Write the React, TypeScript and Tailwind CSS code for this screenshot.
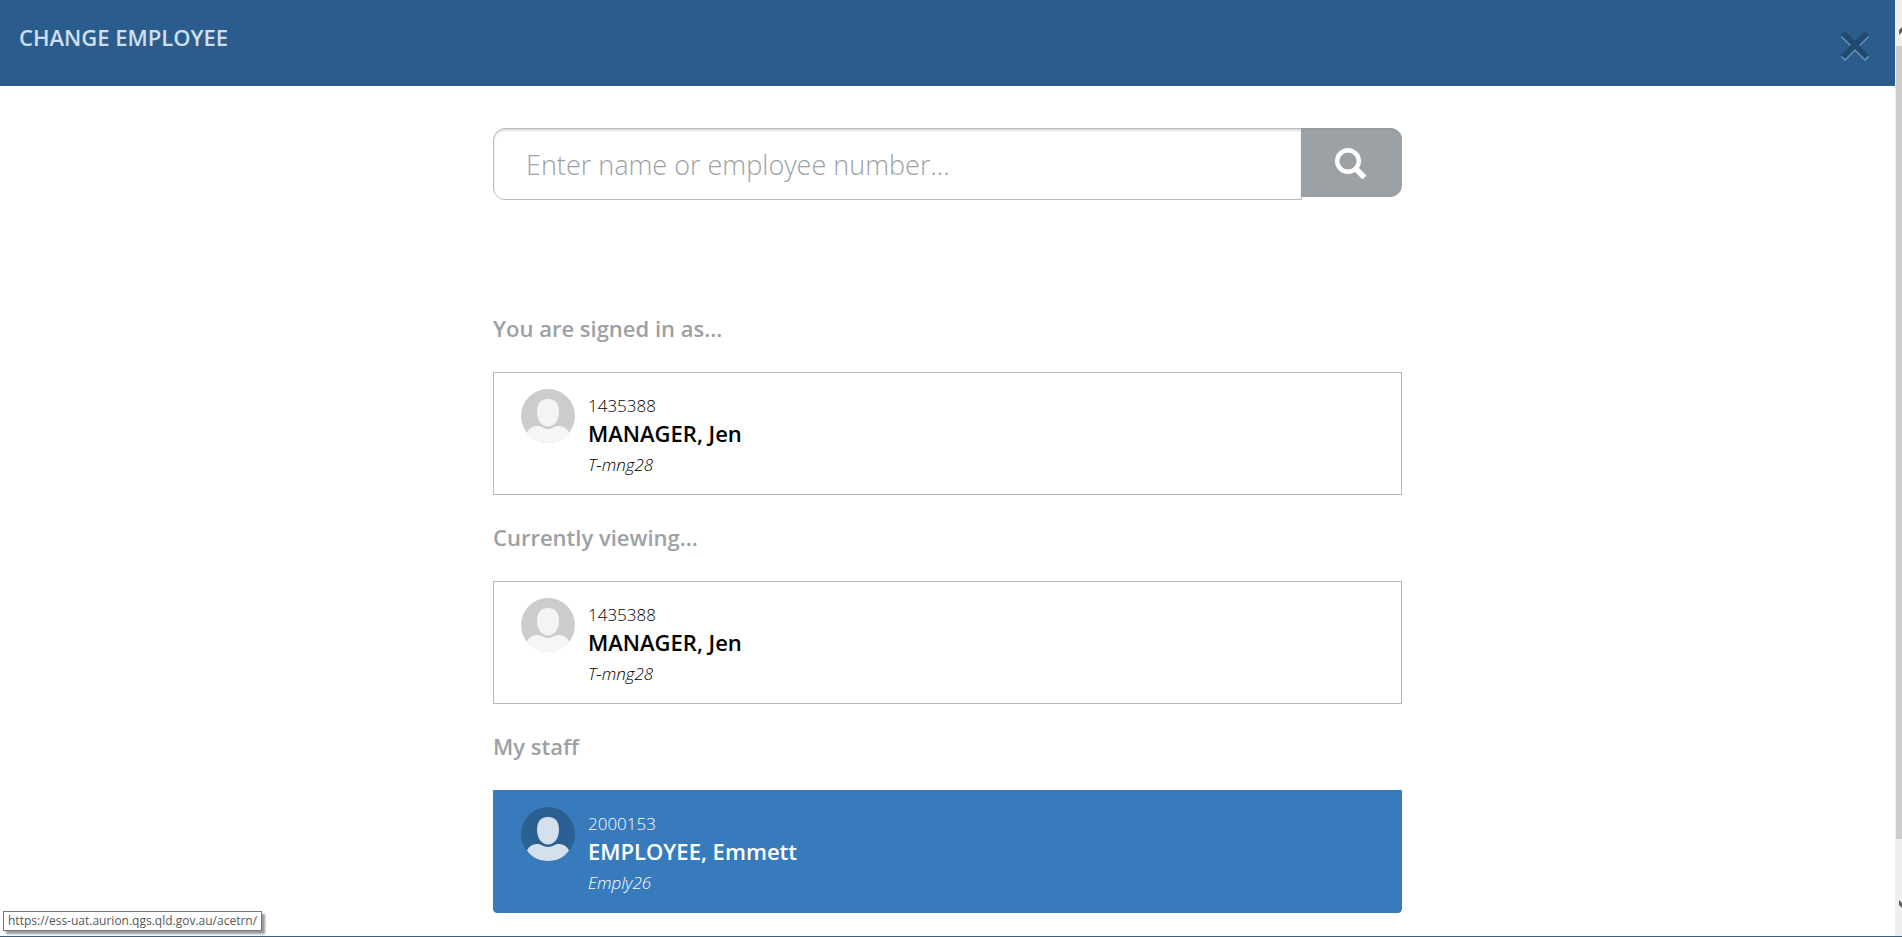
import React from 'react';

type Employee = { id: string; name: string; position: string };

const manager: Employee = { id: '1435388', name: 'MANAGER, Jen', position: 'T-mng28' };
const staff: Employee = { id: '2000153', name: 'EMPLOYEE, Emmett', position: 'Emply26' };

function Avatar({ active }: { active?: boolean }) {
  return (
    <svg
      viewBox="0 0 54 54"
      className={
        active
          ? 'size-[54px] shrink-0 text-[#2b6093]'
          : 'size-[54px] shrink-0 text-[#cccccc]'
      }
      aria-hidden="true"
    >
      <circle cx="27" cy="27" r="27" fill="currentColor" />
      <path
        d="M27 10c7 0 11 4.500 11 12.500C38 31 33.500 37.500 27 37.500S16 31 16 22.500C16 14.500 20 10 27 10z"
        fill={active ? '#d5e0ec' : '#f4f4f4'}
      />
      <path
        d="M6 43.500c1.500-3.500 5-6.500 10-6.500 2 0 3.500.4 5 1.300 3.500 2.200 8.500 2.200 12 0 1.500-.9 3-1.300 5-1.300 5 0 8.500 3 10 6.500C43.500 50 36 54 27 54S10.500 50 6 43.500z"
        fill={active ? '#d5e0ec' : '#f6f6f6'}
      />
    </svg>
  );
}

function EmployeeCard({ employee, active }: { employee: Employee; active?: boolean }) {
  return (
    <a
      href="#"
      className={
        active
          ? 'flex gap-[13px] rounded-b border border-[#387bbc] bg-[#387bbc] px-[27px] pt-4 pb-[10px] text-white'
          : 'flex gap-[13px] border border-[#b6b9ba] bg-white px-[27px] pt-4 pb-[10px] text-black'
      }
    >
      <Avatar active={active} />
      <div className="pt-[3px]">
        <p className="text-[17px] leading-[28px] font-light">{employee.id}</p>
        <p className="text-[22px] leading-[26px] font-semibold">{employee.name}</p>
        <p className="text-[17px] leading-[38px] font-light italic">{employee.position}</p>
      </div>
    </a>
  );
}

function Section({
  title,
  employee,
  active,
}: {
  title: string;
  employee: Employee;
  active?: boolean;
}) {
  return (
    <section>
      <h2 className="mb-[29px] text-[22px] leading-[30px] font-semibold text-[#9ba1a5]">{title}</h2>
      <EmployeeCard employee={employee} active={active} />
    </section>
  );
}

function ScrollTrack() {
  return (
    <div className="flex w-[7px] shrink-0 flex-col bg-[#efefef] pl-px" aria-hidden="true">
      <div className="flex h-[46px] justify-end pt-[27px]">
        <svg viewBox="0 0 3 8" className="h-2 w-[3px]">
          <path d="M0 3L3 0v5L0 8z" fill="#606060" />
        </svg>
      </div>
      <div className="flex-1 bg-[#cdcdcd]" />
      <div className="flex h-[97px] justify-end pt-[61px]">
        <svg viewBox="0 0 3 8" className="h-2 w-[3px]">
          <path d="M0 0l3 3v5L0 5z" fill="#606060" />
        </svg>
      </div>
    </div>
  );
}

export default function App() {
  return (
    <div className="relative flex min-h-screen border-b border-[#3d5f7c] bg-white font-['Open_Sans','Noto_Sans',sans-serif]">
      <div className="min-w-0 flex-1">
        <header className="flex h-[86px] items-start justify-between bg-[#2a5d8d] pr-[25px] pl-[19px]">
          <h1 className="pt-[22px] text-[22px] leading-[30px] font-semibold text-[#cfdeec]">
            CHANGE EMPLOYEE
          </h1>
          <button type="button" aria-label="Close" className="mt-[30px]">
            <svg viewBox="0 0 30 32" className="h-8 w-[30px]" fill="none" strokeWidth="6">
              <path d="M3 5l24 24M27 5L3 29" stroke="#6d92b8" />
              <path d="M3 3l24 24M27 3L3 27" stroke="#224a70" />
            </svg>
          </button>
        </header>

        <main className="mx-auto w-full max-w-[909px] pt-[42px]">
          <form role="search" className="flex items-start" onSubmit={(e) => e.preventDefault()}>
            <input
              type="text"
              aria-label="Employee name or number"
              placeholder="Enter name or employee number..."
              className="h-[72px] min-w-0 flex-1 rounded-l-xl border border-[#b9bbbc] bg-white px-8 text-[27px] font-light text-[#33383b] shadow-[inset_0_2px_2px_#dddddd] outline-none placeholder:text-[#9ba1a5]"
            />
            <button
              type="submit"
              aria-label="Search"
              className="-ml-px flex h-[69px] w-[101px] items-center justify-center rounded-r-xl bg-[#9ba1a5] pr-[2px] shadow-[inset_0_2px_1px_#959b9f]"
            >
              <svg viewBox="0 0 32 32" className="size-8" fill="none" stroke="#ffffff">
                <circle cx="13" cy="14" r="10.800" strokeWidth="4.400" />
                <path d="M20 21l9.500 9.500" strokeWidth="5.600" />
              </svg>
            </button>
          </form>

          <div className="flex flex-col gap-[27px] pt-[113px] pb-[23px]">
            <Section title="You are signed in as..." employee={manager} />
            <Section title="Currently viewing..." employee={manager} />
            <Section title="My staff" employee={staff} active />
          </div>
        </main>
      </div>
      <ScrollTrack />
      <div className="absolute bottom-[5px] left-[3px] border border-[#767676] bg-white px-1 text-[12px] leading-[18px] text-[#575757] shadow-[3px_3px_2px_#9a9a9a]">
        https://ess-uat.aurion.qgs.qld.gov.au/acetrn/
      </div>
    </div>
  );
}
